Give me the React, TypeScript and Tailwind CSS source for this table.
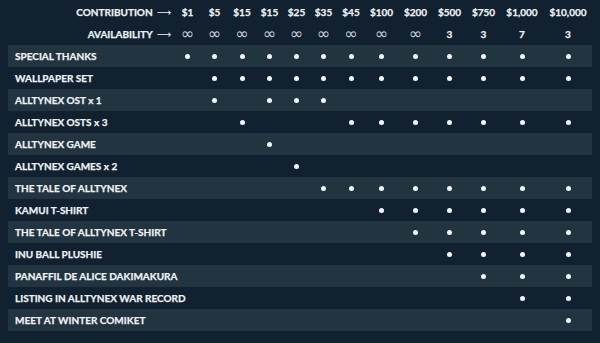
const tiers = ['$1', '$5', '$15', '$15', '$25', '$35', '$45', '$100', '$200', '$500', '$750', '$1,000', '$10,000'];
const avail = ['∞', '∞', '∞', '∞', '∞', '∞', '∞', '∞', '∞', '3', '3', '7', '3'];
const widths = ['w-[27px]', 'w-[27px]', 'w-[28px]', 'w-[27px]', 'w-[27px]', 'w-[27px]', 'w-[28px]', 'w-[33px]', 'w-[35px]', 'w-[33px]', 'w-[35px]', 'w-[42px]', 'w-[50px]'];

// which tier columns include each reward
const rewards: [string, number[]][] = [
  ['SPECIAL THANKS', [0, 1, 2, 3, 4, 5, 6, 7, 8, 9, 10, 11, 12]],
  ['WALLPAPER SET', [1, 2, 3, 4, 5, 6, 7, 8, 9, 10, 11, 12]],
  ['ALLTYNEX OST x 1', [1, 3, 4, 5]],
  ['ALLTYNEX OSTS x 3', [2, 6, 7, 8, 9, 10, 11, 12]],
  ['ALLTYNEX GAME', [3]],
  ['ALLTYNEX GAMES x 2', [4]],
  ['THE TALE OF ALLTYNEX', [5, 6, 7, 8, 9, 10, 11, 12]],
  ['KAMUI T-SHIRT', [7, 8, 9, 10, 11, 12]],
  ['THE TALE OF ALLTYNEX T-SHIRT', [8, 9, 10, 11, 12]],
  ['INU BALL PLUSHIE', [9, 10, 11, 12]],
  ['PANAFFIL DE ALICE DAKIMAKURA', [10, 11, 12]],
  ['LISTING IN ALLTYNEX WAR RECORD', [11, 12]],
  ['MEET AT WINTER COMIKET', [12]],
];

function Arrow() {
  return <span className="font-normal text-[10px] ml-[4px] font-['DejaVu_Sans'] [-webkit-text-stroke:0px]">⟶</span>;
}

export default function App() {
  return (
    <div className="w-[600px] h-[343px] bg-[#12212f] text-[#eef2f5] px-2 pt-px overflow-hidden font-['Lato',sans-serif] [-webkit-text-stroke:0.25px_#eef2f5]">
      {/* header */}
      <div className="flex h-[22px] items-center text-[10px] font-bold">
        <div className="w-[166px] shrink-0 text-right pr-[3px] whitespace-nowrap">CONTRIBUTION<Arrow /></div>
        {tiers.map((t, i) => (
          <div key={i} className={`${widths[i]} shrink-0 text-center`}>{t}</div>
        ))}
      </div>
      <div className="flex h-[22px] items-center text-[10px] font-bold">
        <div className="w-[166px] shrink-0 text-right pr-[3px] whitespace-nowrap">AVAILABILITY<Arrow /></div>
        {avail.map((a, i) => (
          <div key={i} className={`${widths[i]} shrink-0 text-center`}>
            {a === '∞' ? (
              <span className="font-normal text-[16px] leading-none text-[#c3ccd4] font-['DejaVu_Sans'] [-webkit-text-stroke:0px]">∞</span>
            ) : (
              a
            )}
          </div>
        ))}
      </div>

      {/* rewards */}
      {rewards.map(([name, cols], r) => (
        <div key={name} className={`flex h-[22px] items-center ${r % 2 === 0 ? 'bg-[#22343f]' : ''}`}>
          <div className="w-[166px] shrink-0 pl-[7px] text-[10px] font-bold whitespace-nowrap">{name}</div>
          {widths.map((w, i) => (
            <div key={i} className={`${w} shrink-0 flex justify-center`}>
              {cols.includes(i) && <span className="w-[5px] h-[5px] rounded-full bg-[#f3f6f9]" />}
            </div>
          ))}
        </div>
      ))}
    </div>
  );
}
